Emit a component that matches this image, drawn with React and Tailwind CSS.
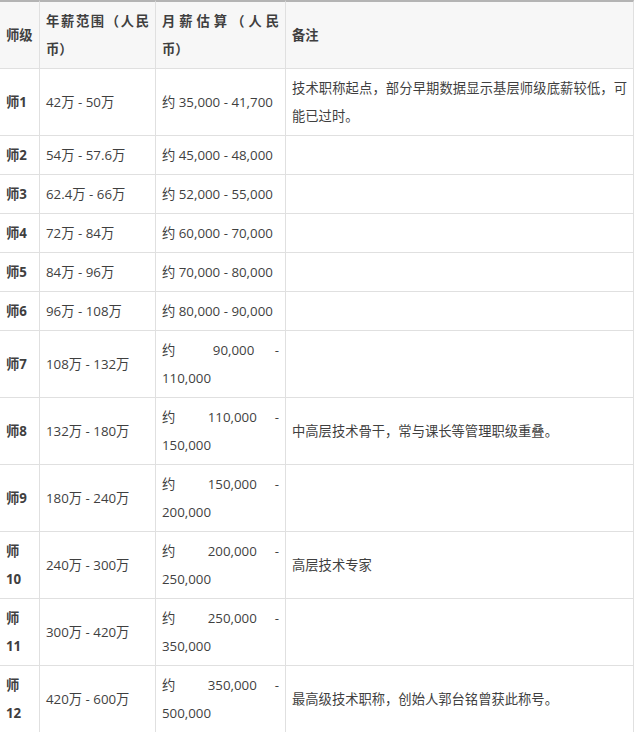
const rows = [
  { lv: '师1', year: '42万 - 50万', month: '约 35,000 - 41,700', note: '技术职称起点，部分早期数据显示基层师级底薪较低，可能已过时。' },
  { lv: '师2', year: '54万 - 57.6万', month: '约 45,000 - 48,000', note: '' },
  { lv: '师3', year: '62.4万 - 66万', month: '约 52,000 - 55,000', note: '' },
  { lv: '师4', year: '72万 - 84万', month: '约 60,000 - 70,000', note: '' },
  { lv: '师5', year: '84万 - 96万', month: '约 70,000 - 80,000', note: '' },
  { lv: '师6', year: '96万 - 108万', month: '约 80,000 - 90,000', note: '' },
  { lv: '师7', year: '108万 - 132万', month: '约 90,000 - 110,000', note: '' },
  { lv: '师8', year: '132万 - 180万', month: '约 110,000 - 150,000', note: '中高层技术骨干，常与课长等管理职级重叠。' },
  { lv: '师9', year: '180万 - 240万', month: '约 150,000 - 200,000', note: '' },
  { lv: '师10', year: '240万 - 300万', month: '约 200,000 - 250,000', note: '高层技术专家' },
  { lv: '师11', year: '300万 - 420万', month: '约 250,000 - 350,000', note: '' },
  { lv: '师12', year: '420万 - 600万', month: '约 350,000 - 500,000', note: '最高级技术职称，创始人郭台铭曾获此称号。' },
];

const cell = 'border-b border-r border-[#e0e0e0] px-[6px] py-[5px] align-middle text-justify';
const head = cell + ' border-t-2 border-t-[#b4b4b4] bg-[#f7f7f7] font-bold';

export default function App() {
  return (
    <div
      className="w-[634px] h-[732px] overflow-hidden bg-white text-[#3f3f3f] text-[13.3px] leading-[28px] [text-spacing-trim:space-all]"
      style={{ fontFamily: '"Open Sans", "Noto Sans CJK SC", sans-serif' }}
    >
      <table className="w-[634px] table-fixed border-separate border-spacing-0">
        <colgroup>
          <col className="w-[40px]" />
          <col className="w-[116px]" />
          <col className="w-[130px]" />
          <col className="w-[348px]" />
        </colgroup>
        <thead>
          <tr>
            <th className={head + ' text-left'}>师级</th>
            <th className={head}>年薪范围（人民币）</th>
            <th className={head}>月薪估算（人民币）</th>
            <th className={head + ' text-left'}>备注</th>
          </tr>
        </thead>
        <tbody>
          {rows.map((r) => (
            <tr key={r.lv}>
              <td className={cell + ' font-bold'}>{r.lv}</td>
              <td className={cell}>{r.year}</td>
              <td className={cell}>{r.month}</td>
              <td className={cell}>{r.note}</td>
            </tr>
          ))}
        </tbody>
      </table>
    </div>
  );
}
